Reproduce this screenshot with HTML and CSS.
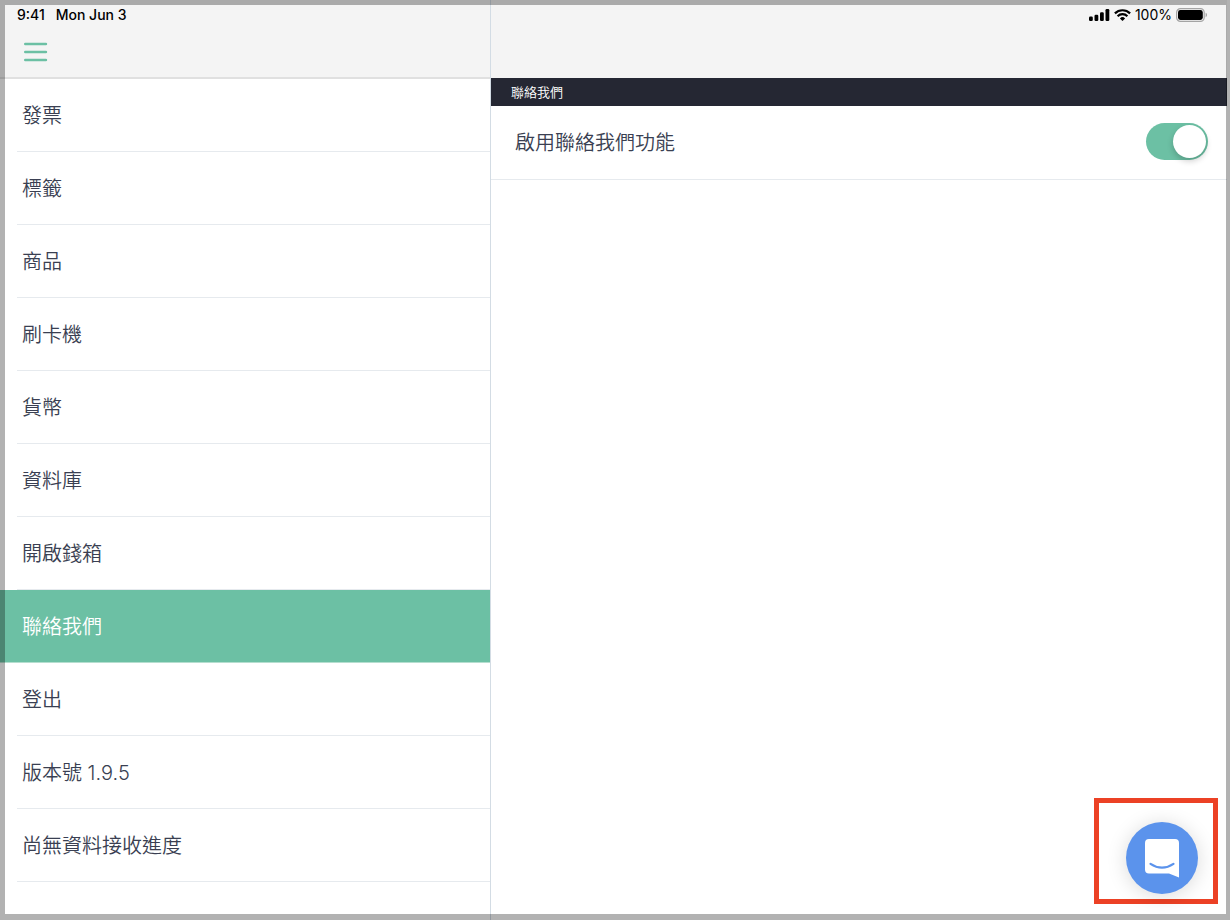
FILE: index.html
```html
<!DOCTYPE html>
<html lang="zh-Hant">
<head>
    <meta charset="UTF-8">
    <meta name="viewport" content="width=device-width, initial-scale=1.0">
    <title>聯絡我們</title>
    <link rel="stylesheet" href="styles.css">
</head>
<body>
    <div class="screen">
        <div class="sidebar">
            <header class="topbar">
                <div class="status">
                    <span>9:41</span>
                    <span>Mon Jun 3</span>
                </div>
                <button class="menu" aria-label="Menu">
                    <svg width="24" height="20" viewBox="0 0 24 20" stroke="#6cc0a4" stroke-width="2.6" stroke-linecap="round">
                        <path d="M1.3 2h20.6M1.3 10h20.6M1.3 18h20.6"/>
                    </svg>
                </button>
            </header>
            <nav class="list">
                <a href="#">發票</a>
                <a href="#">標籤</a>
                <a href="#">商品</a>
                <a href="#">刷卡機</a>
                <a href="#">貨幣</a>
                <a href="#">資料庫</a>
                <a href="#">開啟錢箱</a>
                <a href="#" class="active">聯絡我們</a>
                <a href="#">登出</a>
                <a href="#">版本號 1.9.5</a>
                <a href="#">尚無資料接收進度</a>
            </nav>
        </div>

        <main class="detail">
            <header class="topbar">
                <div class="status status-right">
                    <svg width="21" height="12" viewBox="0 0 21 12">
                        <rect x="0" y="7.6" width="3.8" height="4.4" rx="1.2"/>
                        <rect x="5.5" y="5.8" width="3.8" height="6.2" rx="1.2"/>
                        <rect x="11" y="3.2" width="3.8" height="8.8" rx="1.2"/>
                        <rect x="16.5" y="0" width="3.8" height="12" rx="1.2"/>
                    </svg>
                    <svg class="wifi" width="17" height="12" viewBox="0 0 17 12" fill="none" stroke="#000" stroke-width="2.2">
                        <path d="M.9 4.4a10.8 10.8 0 0 1 15.2 0M3.6 7.2a7 7 0 0 1 9.8 0"/>
                        <path d="M8.5 12L5.9 9.4a3.7 3.7 0 0 1 5.2 0z" fill="#000" stroke="none"/>
                    </svg>
                    <span>100%</span>
                    <svg class="battery" width="32" height="14" viewBox="0 0 32 14">
                        <rect x=".6" y=".6" width="27.6" height="12.8" rx="3.8" fill="none" stroke="#a4a4a4" stroke-width="1.2"/>
                        <rect x="2" y="2" width="24.8" height="10" rx="2.4"/>
                        <path d="M29.6 4.8a2.4 2.4 0 0 1 0 4.4z" fill="#a4a4a4"/>
                    </svg>
                </div>
            </header>
            <h1 class="section-title">聯絡我們</h1>
            <div class="setting">
                <label for="contact">啟用聯絡我們功能</label>
                <input type="checkbox" id="contact" class="switch" role="switch" checked>
            </div>
        </main>
    </div>

    <div class="chat-highlight">
        <button class="chat" aria-label="Chat">
            <svg width="34" height="39" viewBox="0 0 34 39">
                <path d="M4 0h26a4 4 0 0 1 4 4v34.5L24 34.5H4a4 4 0 0 1-4-4V4a4 4 0 0 1 4-4z" fill="#fff"/>
                <path d="M5.5 24.8q11.5 7.8 23 0" fill="none" stroke="#5b93ec" stroke-width="2.2" stroke-linecap="round"/>
            </svg>
        </button>
    </div>
</body>
</html>
```
FILE: styles.css
```css
* {
    box-sizing: border-box;
}

body {
    margin: 0;
    background-color: #fff;
    color: #3a3f52;
    font-family: Inter, "Noto Sans CJK TC", sans-serif;
    font-size: 20px;
}

/* grey frame laid over the whole screen */
body::after {
    content: "";
    position: fixed;
    inset: 0;
    border: solid rgba(0, 0, 0, 0.3);
    border-width: 5px 4px 6px 5px;
    pointer-events: none;
}

.screen {
    display: grid;
    grid-template-columns: minmax(0, 491px) 1fr;
    min-height: 100vh;
}

.sidebar {
    border-right: 1px solid #d3dce4;
}

.detail {
    padding-right: 3px;
}

.topbar {
    height: 78px;
    padding: 6px 17px 0;
    background-color: #f4f4f4;
}

.sidebar .topbar {
    height: 79px;
    border-bottom: 2px solid #e0e0e0;
}

.status {
    display: flex;
    align-items: center;
    gap: 11px;
    height: 18px;
    color: #000;
    font-size: 14px;
    font-weight: 500;
}

.status span {
    padding-bottom: 2px;
}

.status-right {
    justify-content: flex-end;
    gap: 4px;
    padding-right: 2px;
    font-weight: 400;
}

.menu {
    display: block;
    margin: 18px 0 0 7px;
    padding: 0;
    border: none;
    background: none;
    cursor: pointer;
}

.menu svg {
    display: block;
}

.list a {
    display: flex;
    align-items: center;
    height: 73px;
    margin-left: 17px;
    padding: 0 0 2px 5px;
    border-bottom: 1px solid #e6eaee;
    color: inherit;
    font-weight: 350;
    text-decoration: none;
}

.list .active {
    margin-left: 0;
    padding-left: 22px;
    border-bottom-color: #b5decf;
    background-color: #6cc0a4;
    color: #fff;
}

.section-title {
    margin: 0;
    padding-left: 20px;
    background-color: #252733;
    color: #fff;
    font-size: 13px;
    font-weight: 350;
    line-height: 28px;
}

.setting {
    display: flex;
    align-items: center;
    justify-content: space-between;
    height: 74px;
    padding: 0 19px 2px 24px;
    border-bottom: 1px solid #e6eaee;
    font-weight: 350;
}

.switch {
    appearance: none;
    width: 62px;
    height: 37px;
    margin: 0;
    padding: 2px;
    border-radius: 19px;
    background-color: #ccc;
    cursor: pointer;
}

.switch::before {
    content: "";
    display: block;
    width: 33px;
    height: 33px;
    border-radius: 50%;
    background-color: #fff;
    box-shadow: 0 3px 6px rgba(0, 0, 0, 0.2);
}

.switch:checked {
    background-color: #6cc0a4;
}

.switch:checked::before {
    margin-left: auto;
}

.chat-highlight {
    position: fixed;
    right: 12px;
    bottom: 16px;
    padding: 19px 15px 5px 27px;
    border: 5px solid #ec4125;
}

.chat {
    display: flex;
    align-items: center;
    justify-content: center;
    width: 72px;
    height: 72px;
    padding: 0;
    border: none;
    border-radius: 50%;
    background-color: #5b93ec;
    box-shadow: 0 2px 20px rgba(0, 0, 0, 0.15);
    cursor: pointer;
}
```
